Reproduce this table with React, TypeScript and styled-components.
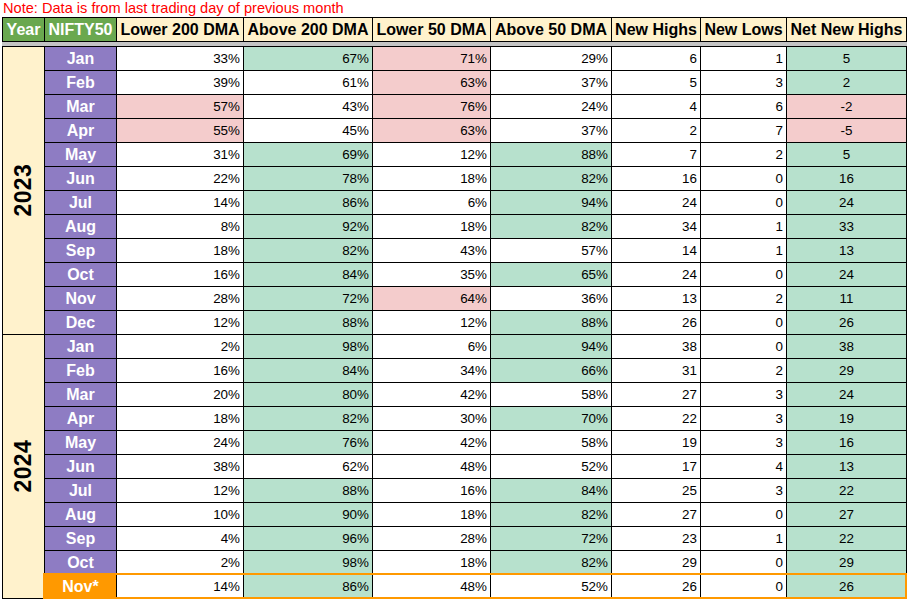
import React from "react";
import styled, { createGlobalStyle } from "styled-components";

const GlobalStyle = createGlobalStyle`
  html, body {
    margin: 0;
    padding: 0;
    background: #fff;
    font-family: "Liberation Sans", Arial, sans-serif;
  }
`;

const Page = styled.div`
  width: 907px;
  height: 601px;
  overflow: hidden;
  background: #fff;
`;

const Note = styled.div`
  height: 17px;
  line-height: 17px;
  padding-left: 3px;
  font-size: 14.6px;
  color: #ff0000;
  white-space: nowrap;
`;

const Sheet = styled.div`
  margin-left: 2px;
  display: grid;
  grid-template-columns: 41px 71px 126px 128px 117px 120px 88px 85px 119px;
  grid-template-rows: 23px 4px repeat(23, 23px);
  gap: 1px;
  padding: 1px;
  width: max-content;
  background: #000;
`;

const HeadCell = styled.div<{ $green?: boolean }>`
  display: flex;
  align-items: center;
  justify-content: center;
  background: ${(p) => (p.$green ? "#6aa84f" : "#fff2cc")};
  color: ${(p) => (p.$green ? "#fff" : "#000")};
  font-size: 16px;
  font-weight: bold;
  white-space: nowrap;
  overflow: hidden;
`;

const FrozenBar = styled.div`
  grid-column: 1 / -1;
  background: #c4c4c4;
  margin: 0 -1px;
`;

const YearCell = styled.div<{ $rows: number }>`
  grid-column: 1;
  grid-row: span ${(p) => p.$rows};
  background: #fff2cc;
  display: flex;
  align-items: center;
  justify-content: center;
`;

const YearText = styled.span`
  writing-mode: vertical-rl;
  transform: rotate(180deg);
  font-size: 23px;
  font-weight: bold;
  color: #000;
  letter-spacing: 0.3px;
`;

const RowBox = styled.div<{ $current?: boolean }>`
  grid-column: 2 / -1;
  display: grid;
  grid-template-columns: subgrid;
  position: relative;

  ${(p) =>
    p.$current &&
    `
    &::after {
      content: "";
      position: absolute;
      top: -2px;
      left: -2px;
      right: -1px;
      bottom: -1px;
      border: 2px solid #ff9900;
      pointer-events: none;
    }
  `}
`;

const MonthCell = styled.div<{ $current?: boolean }>`
  display: flex;
  align-items: center;
  justify-content: center;
  background: ${(p) => (p.$current ? "#ff9900" : "#8e7cc3")};
  color: #fff;
  font-size: 16px;
  font-weight: bold;
`;

type Tone = "green" | "red" | "none";

const toneColor: Record<Tone, string> = {
  green: "#b7e1cd",
  red: "#f4cccc",
  none: "#fff",
};

const ValueCell = styled.div<{ $tone: Tone; $center?: boolean }>`
  display: flex;
  align-items: center;
  justify-content: ${(p) => (p.$center ? "center" : "flex-end")};
  padding-right: ${(p) => (p.$center ? "0" : "3px")};
  background: ${(p) => toneColor[p.$tone]};
  color: #000;
  font-size: 13.4px;
`;

type Row = [string, number, number, number, number, number, number, number];

const data2023: Row[] = [
  ["Jan", 33, 67, 71, 29, 6, 1, 5],
  ["Feb", 39, 61, 63, 37, 5, 3, 2],
  ["Mar", 57, 43, 76, 24, 4, 6, -2],
  ["Apr", 55, 45, 63, 37, 2, 7, -5],
  ["May", 31, 69, 12, 88, 7, 2, 5],
  ["Jun", 22, 78, 18, 82, 16, 0, 16],
  ["Jul", 14, 86, 6, 94, 24, 0, 24],
  ["Aug", 8, 92, 18, 82, 34, 1, 33],
  ["Sep", 18, 82, 43, 57, 14, 1, 13],
  ["Oct", 16, 84, 35, 65, 24, 0, 24],
  ["Nov", 28, 72, 64, 36, 13, 2, 11],
  ["Dec", 12, 88, 12, 88, 26, 0, 26],
];

const data2024: Row[] = [
  ["Jan", 2, 98, 6, 94, 38, 0, 38],
  ["Feb", 16, 84, 34, 66, 31, 2, 29],
  ["Mar", 20, 80, 42, 58, 27, 3, 24],
  ["Apr", 18, 82, 30, 70, 22, 3, 19],
  ["May", 24, 76, 42, 58, 19, 3, 16],
  ["Jun", 38, 62, 48, 52, 17, 4, 13],
  ["Jul", 12, 88, 16, 84, 25, 3, 22],
  ["Aug", 10, 90, 18, 82, 27, 0, 27],
  ["Sep", 4, 96, 28, 72, 23, 1, 22],
  ["Oct", 2, 98, 18, 82, 29, 0, 29],
  ["Nov*", 14, 86, 48, 52, 26, 0, 26],
];

const headers = [
  "Lower 200 DMA",
  "Above 200 DMA",
  "Lower 50 DMA",
  "Above 50 DMA",
  "New Highs",
  "New Lows",
  "Net New Highs",
];

const DataRow: React.FC<{ row: Row }> = ({ row }) => {
  const [month, low200, up200, low50, up50, highs, lows, net] = row;
  const current = month.endsWith("*");
  return (
    <RowBox $current={current}>
      <MonthCell $current={current}>{month}</MonthCell>
      <ValueCell $tone={low200 > 50 ? "red" : "none"}>{low200}%</ValueCell>
      <ValueCell $tone={up200 >= 65 ? "green" : "none"}>{up200}%</ValueCell>
      <ValueCell $tone={low50 >= 60 ? "red" : "none"}>{low50}%</ValueCell>
      <ValueCell $tone={up50 >= 65 ? "green" : "none"}>{up50}%</ValueCell>
      <ValueCell $tone="none">{highs}</ValueCell>
      <ValueCell $tone="none">{lows}</ValueCell>
      <ValueCell $tone={net < 0 ? "red" : "green"} $center>
        {net}
      </ValueCell>
    </RowBox>
  );
};

const App: React.FC = () => {
  return (
    <Page>
      <GlobalStyle />
      <Note>Note: Data is from last trading day of previous month</Note>
      <Sheet>
        <HeadCell $green>Year</HeadCell>
        <HeadCell $green>NIFTY50</HeadCell>
        {headers.map((h) => (
          <HeadCell key={h}>{h}</HeadCell>
        ))}
        <FrozenBar />

        <YearCell $rows={data2023.length}>
          <YearText>2023</YearText>
        </YearCell>
        {data2023.map((r) => (
          <DataRow key={"23" + r[0]} row={r} />
        ))}

        <YearCell $rows={data2024.length}>
          <YearText>2024</YearText>
        </YearCell>
        {data2024.map((r) => (
          <DataRow key={"24" + r[0]} row={r} />
        ))}
      </Sheet>
    </Page>
  );
};

export default App;
